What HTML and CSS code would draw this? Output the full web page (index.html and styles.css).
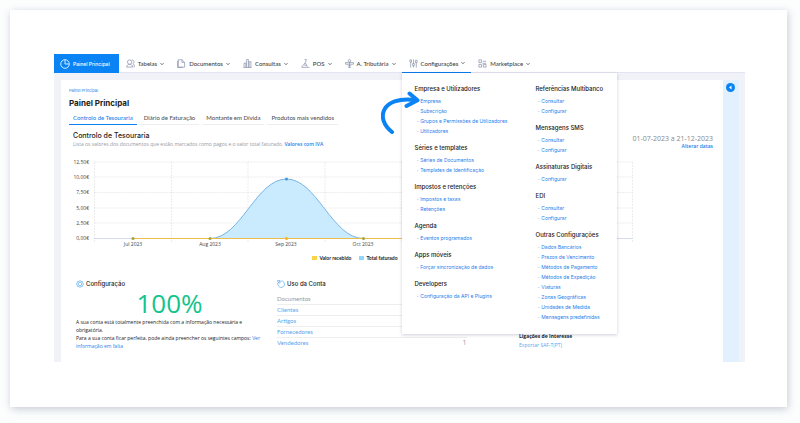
FILE: index.html
```html
<!DOCTYPE html>
<html lang="pt">
<head>
    <meta charset="UTF-8">
    <meta name="viewport" content="width=device-width, initial-scale=1.0">
    <title>Painel Principal</title>
    <link rel="stylesheet" href="styles.css">
</head>
<body>
    <div class="frame">
        <div class="app">
            <nav class="navbar">
                <a class="nav-item active" href="#">
                    <svg class="icon" viewBox="0 0 10 10"><circle cx="5" cy="5" r="4.3"/><path d="M5 .8V5h4.2"/></svg>
                    Painel Principal
                </a>
                <a class="nav-item" href="#">
                    <svg class="icon" viewBox="0 0 10 10"><circle cx="4" cy="3.4" r="2.4"/><path d="M.6 9c.2-2 1.6-3 3.4-3s3.2 1 3.4 3zM6.4 1.2c2.6-.6 3.4 3 1.2 4 1.2.5 1.8 1.8 1.9 3.3H8.4"/></svg>
                    Tabelas <svg class="caret" viewBox="0 0 4 4"><path d="M.5 1.2 2 2.7 3.5 1.2"/></svg>
                </a>
                <a class="nav-item" href="#">
                    <svg class="icon" viewBox="0 0 10 10"><path d="M1.5 9V.8h4l3 3V9zM5.5.8v3h3M.5 2v7.5h6"/></svg>
                    Documentos <svg class="caret" viewBox="0 0 4 4"><path d="M.5 1.2 2 2.7 3.5 1.2"/></svg>
                </a>
                <a class="nav-item" href="#">
                    <svg class="icon" viewBox="0 0 10 10"><path d="M.5 9.5h9M1.2 9.5v-5h2v5M4 9.5V.6h2v8.9M6.8 9.5V3h2v6.5"/></svg>
                    Consultas <svg class="caret" viewBox="0 0 4 4"><path d="M.5 1.2 2 2.7 3.5 1.2"/></svg>
                </a>
                <a class="nav-item" href="#">
                    <svg class="icon" viewBox="0 0 10 10"><path d="M4 .6h2L4.8 4 7 8.5M4.6 4.2 1 8.8M.6 9.3h8.8M3.4 6.5l3 1"/></svg>
                    POS <svg class="caret" viewBox="0 0 4 4"><path d="M.5 1.2 2 2.7 3.5 1.2"/></svg>
                </a>
                <a class="nav-item" href="#">
                    <svg class="icon" viewBox="0 0 10 10"><circle cx="5" cy="2" r="1.4"/><path d="M.6 4h8.8v1.8H.6zM5 3.5v6M3 7.5h4M3.5 9.5h3"/></svg>
                    A. Tributária <svg class="caret" viewBox="0 0 4 4"><path d="M.5 1.2 2 2.7 3.5 1.2"/></svg>
                </a>
                <div class="nav-open">
                    <a class="nav-item" href="#">
                        <svg class="icon" viewBox="0 0 10 10"><path d="M1 1h1.8v2.5H1zM4.1 5h1.8v2.5H4.1zM7.2 1.5H9V4H7.2zM1.9 3.5v6M5 .5V5M5 7.5v2M8.1 4v5.5"/></svg>
                        Configurações <svg class="caret" viewBox="0 0 4 4"><path d="M.5 1.2 2 2.7 3.5 1.2"/></svg>
                    </a>
                    <div class="mega-menu">
                        <div class="mega-col">
                            <section>
                                <h3>Empresa e Utilizadores</h3>
                                <ul>
                                    <li><a href="#">Empresa</a></li>
                                    <li><a href="#">Subscrição</a></li>
                                    <li><a href="#">Grupos e Permissões de Utilizadores</a></li>
                                    <li><a href="#">Utilizadores</a></li>
                                </ul>
                            </section>
                            <section>
                                <h3>Séries e templates</h3>
                                <ul>
                                    <li><a href="#">Séries de Documentos</a></li>
                                    <li><a href="#">Templates de Identificação</a></li>
                                </ul>
                            </section>
                            <section>
                                <h3>Impostos e retenções</h3>
                                <ul>
                                    <li><a href="#">Impostos e taxas</a></li>
                                    <li><a href="#">Retenções</a></li>
                                </ul>
                            </section>
                            <section>
                                <h3>Agenda</h3>
                                <ul>
                                    <li><a href="#">Eventos programados</a></li>
                                </ul>
                            </section>
                            <section>
                                <h3>Apps móveis</h3>
                                <ul>
                                    <li><a href="#">Forçar sincronização de dados</a></li>
                                </ul>
                            </section>
                            <section>
                                <h3>Developers</h3>
                                <ul>
                                    <li><a href="#">Configuração da API e Plugins</a></li>
                                </ul>
                            </section>
                        </div>
                        <div class="mega-col">
                            <section>
                                <h3>Referências Multibanco</h3>
                                <ul>
                                    <li><a href="#">Consultar</a></li>
                                    <li><a href="#">Configurar</a></li>
                                </ul>
                            </section>
                            <section>
                                <h3>Mensagens SMS</h3>
                                <ul>
                                    <li><a href="#">Consultar</a></li>
                                    <li><a href="#">Configurar</a></li>
                                </ul>
                            </section>
                            <section>
                                <h3>Assinaturas Digitais</h3>
                                <ul>
                                    <li><a href="#">Configurar</a></li>
                                </ul>
                            </section>
                            <section>
                                <h3>EDI</h3>
                                <ul>
                                    <li><a href="#">Consultar</a></li>
                                    <li><a href="#">Configurar</a></li>
                                </ul>
                            </section>
                            <section>
                                <h3>Outras Configurações</h3>
                                <ul>
                                    <li><a href="#">Dados Bancários</a></li>
                                    <li><a href="#">Prazos de Vencimento</a></li>
                                    <li><a href="#">Métodos de Pagamento</a></li>
                                    <li><a href="#">Métodos de Expedição</a></li>
                                    <li><a href="#">Viaturas</a></li>
                                    <li><a href="#">Zonas Geográficas</a></li>
                                    <li><a href="#">Unidades de Medida</a></li>
                                    <li><a href="#">Mensagens predefinidas</a></li>
                                </ul>
                            </section>
                        </div>
                    </div>
                    <svg class="arrow" viewBox="0 0 40 44"><path d="M11 41C-6 28 0 5 34 9"/><path d="M28.5 2.5 36.5 9.2 25.5 15"/></svg>
                </div>
                <a class="nav-item" href="#">
                    <svg class="icon" viewBox="0 0 10 10"><path d="M1 1h3v3H1zM1 6h3v3H1zM6 6h3v3H6zM5.5 2.5H9M5 4.8h4"/></svg>
                    Marketplace <svg class="caret" viewBox="0 0 4 4"><path d="M.5 1.2 2 2.7 3.5 1.2"/></svg>
                </a>
            </nav>

            <div class="workspace">
                <main class="page">
                    <a class="breadcrumb" href="#">Painel Principal</a>
                    <h1>Painel Principal</h1>
                    <div class="tabs">
                        <a class="tab selected" href="#">Controlo de Tesouraria</a>
                        <a class="tab" href="#">Diário de Faturação</a>
                        <a class="tab" href="#">Montante em Dívida</a>
                        <a class="tab" href="#">Produtos mais vendidos</a>
                    </div>

                    <div class="treasury-head">
                        <div>
                            <h2>Controlo de Tesouraria</h2>
                            <p>Lista os valores dos documentos que estão marcados como pagos e o valor total faturado. <a href="#">Valores com IVA</a></p>
                        </div>
                        <div class="period">
                            <span>01-07-2023 a 21-12-2023</span>
                            <a href="#">Alterar datas</a>
                        </div>
                    </div>

                    <div class="chart">
                        <svg viewBox="0 0 564 92">
                            <path class="grid" d="M25.5 7h538M25.5 22h538M25.5 37.5h538M25.5 53h538M25.5 68h538M25.5 7v80M102.5 7v80M179 7v80M256 7v80M333 7v80M410 7v80M487 7v80M563.5 7v80"/>
                            <path class="axis" d="M25 83.5h539"/>
                            <path class="area" d="M141 83.5C172 83.5 187 24 217.5 24S263 83.5 294.5 83.5z"/>
                            <path class="curve" d="M64 83.5H141C172 83.5 187 24 217.5 24S263 83.5 294.5 83.5H525"/>
                            <path class="received" d="M64 83.5H525"/>
                            <g class="dots">
                                <circle cx="64" cy="83.5" r="1.5"/><circle cx="141" cy="83.5" r="1.5"/><circle cx="294.5" cy="83.5" r="1.5"/>
                                <circle class="dot-gold" cx="217.5" cy="83.5" r="1.5"/><circle class="dot-blue" cx="217.5" cy="24" r="1.5"/>
                            </g>
                            <g class="y-labels">
                                <text x="20" y="9">12,50€</text>
                                <text x="20" y="24">10,00€</text>
                                <text x="20" y="39">7,50€</text>
                                <text x="20" y="55">5,00€</text>
                                <text x="20" y="70">2,50€</text>
                                <text x="20" y="85">0,00€</text>
                            </g>
                            <g class="x-labels">
                                <text x="64" y="91">Jul 2023</text>
                                <text x="141" y="91">Aug 2023</text>
                                <text x="217" y="91">Sep 2023</text>
                                <text x="294" y="91">Oct 2023</text>
                            </g>
                        </svg>
                        <div class="legend">
                            <span class="key gold">Valor recebido</span>
                            <span class="key blue">Total faturado</span>
                        </div>
                    </div>

                    <div class="widgets">
                        <section class="setup">
                            <h4><svg class="badge" viewBox="0 0 10 10"><path d="M5 .7l1.3 1 1.7.1.4 1.7L9.5 5 8.4 6.5 8 8.2l-1.7.1-1.3 1-1.3-1L2 8.2l-.4-1.7L.5 5l1.1-1.5L2 1.800l1.700-.1z"/><circle cx="5" cy="5" r="2.3"/></svg>Configuração</h4>
                            <strong class="percent">100%</strong>
                            <p>A sua conta está totalmente preenchida com a informação necessária e obrigatória.</p>
                            <p>Para a sua conta ficar perfeita, pode ainda preencher os seguintes campos: <a href="#">Ver informação em falta</a></p>
                        </section>
                        <section class="usage">
                            <h4><svg class="badge" viewBox="0 0 10 10"><path d="M3.2 1.5A4.2 4.2 0 1 0 8.8 3 4.2 4.2 0 0 0 5 1.2M.6.7h3.2v3.1C2 3.8.6 2.5.6.7z"/></svg>Uso da Conta</h4>
                            <table>
                                <tr><th scope="row">Documentos</th><td></td></tr>
                                <tr><th scope="row"><a href="#">Clientes</a></th><td></td></tr>
                                <tr><th scope="row"><a href="#">Artigos</a></th><td></td></tr>
                                <tr><th scope="row"><a href="#">Fornecedores</a></th><td></td></tr>
                                <tr><th scope="row"><a href="#">Vendedores</a></th><td>1</td></tr>
                            </table>
                        </section>
                        <section class="links">
                            <h5>Ligações de Interesse</h5>
                            <a href="#">Exportar SAF-T(PT)</a>
                        </section>
                    </div>
                </main>
                <aside class="side">
                    <button class="side-toggle" type="button" aria-label="Abrir painel">
                        <svg viewBox="0 0 9 9"><path d="M5.5 2.5v4L3 4.5z"/></svg>
                    </button>
                </aside>
            </div>
        </div>
    </div>
</body>
</html>
```
FILE: styles.css
```css
* {
    box-sizing: border-box;
}
body {
    margin: 0;
    background-color: #fcfefe;
    color: #222;
    font-family: Inter, "Open Sans", sans-serif;
    font-size: 5px;
}
a {
    color: #2680eb;
    text-decoration: none;
}
h1, h2, h3, h4, h5, p, ul {
    margin: 0;
    padding: 0;
}
.frame {
    margin: 10px 13px 14px 10px;
    padding: 44px 42px 45px 44px;
    background-color: #fff;
    box-shadow: 1px 2px 8px rgba(40, 50, 90, 0.25);
}

/* top navigation */
.navbar {
    display: flex;
    height: 19px;
    border-bottom: 1px solid #e3e3f1;
}
.nav-item {
    display: flex;
    align-items: center;
    gap: 3px;
    height: 19px;
    padding: 0 6px 0 7px;
    color: #444;
    font-family: Lato, sans-serif;
    font-size: 6px;
    font-weight: 500;
    white-space: nowrap;
}
.nav-item.active {
    padding: 0 9px 0 6px;
    background-color: #0a84f5;
    color: #fff;
    font-family: Inter, sans-serif;
    font-size: 5px;
}
.icon {
    width: 9px;
    height: 9px;
    fill: none;
    stroke: #8b93ad;
    stroke-width: 0.8;
}
.active .icon {
    width: 10px;
    height: 10px;
    stroke: #fff;
}
.caret {
    width: 4px;
    height: 4px;
    fill: none;
    stroke: #444;
    stroke-width: 0.8;
}
.nav-open {
    position: relative;
}
.nav-open > .nav-item {
    border-bottom: 1px solid #0a7be8;
}
.mega-menu {
    position: absolute;
    top: 19px;
    left: 0;
    display: grid;
    grid-template-columns: 121px 81px;
    padding: 10px 0 12px 13px;
    background-color: #fff;
    box-shadow: 0 1px 3px rgba(60, 60, 120, 0.25);
}
.mega-col {
    display: flex;
    flex-direction: column;
    gap: 6px;
}
.mega-col h3 {
    margin-bottom: 1px;
    font-size: 6px;
    font-weight: 500;
    line-height: 12px;
    white-space: nowrap;
}
.mega-col ul {
    list-style: none;
}
.mega-col li {
    padding-left: 2px;
    color: #8ab4e8;
    line-height: 10px;
    white-space: nowrap;
}
.mega-col li::before {
    content: "- ";
}
.arrow {
    position: absolute;
    top: 37px;
    left: -21px;
    width: 40px;
    height: 44px;
    fill: none;
    stroke: #0a84f5;
    stroke-width: 4;
    stroke-linecap: round;
    stroke-linejoin: round;
}

/* page */
.workspace {
    display: flex;
    padding: 7px 6px 0 7px;
    background-color: #f1f1f8;
}
.page {
    flex: 1;
    padding: 8px 10px 12px 8px;
    background-color: #fff;
}
.side {
    width: 16px;
    padding: 3px;
    background-color: #e3f0fd;
}
.side-toggle {
    display: block;
    width: 9px;
    height: 9px;
    padding: 0;
    border: none;
    border-radius: 50%;
    background-color: #0a84f5;
}
.side-toggle svg {
    display: block;
    fill: #fff;
}
.breadcrumb {
    display: block;
    font-size: 4px;
    line-height: 6px;
}
h1 {
    font-size: 8px;
    font-weight: 700;
    line-height: 18px;
}
.tabs {
    display: flex;
    gap: 3px;
}
.tab {
    padding: 0 4px;
    border-bottom: 1px solid #eee;
    color: #555;
    font-family: Lato, sans-serif;
    font-size: 6px;
    font-weight: 500;
    line-height: 12px;
}
.tab.selected {
    border-color: #0a84f5;
    color: #2680eb;
}
.treasury-head {
    display: flex;
    justify-content: space-between;
    padding: 6px 0 0 4px;
}
.treasury-head h2 {
    font-size: 7px;
    font-weight: 500;
    line-height: 9px;
}
.treasury-head p {
    color: #999;
    font-family: "Open Sans", sans-serif;
    line-height: 9px;
}
.treasury-head p a {
    font-weight: 600;
}
.period {
    display: flex;
    flex-direction: column;
    padding-top: 3px;
    color: #888;
    font-family: "Open Sans", sans-serif;
    font-size: 7px;
    line-height: 9px;
    text-align: right;
}
.period a {
    font-size: 5px;
    font-weight: 600;
    line-height: 7px;
}

/* chart */
.chart {
    padding: 5px 80px 0 0;
    font-family: "Open Sans", sans-serif;
}
.chart svg {
    display: block;
    width: 100%;
    fill: none;
}
.grid {
    stroke: #e4e4e4;
    stroke-dasharray: 2 1;
    stroke-width: 0.7;
}
.axis {
    stroke: #d3dcec;
}
.area {
    fill: #caeafe;
}
.curve {
    stroke: #76b5e6;
}
.received {
    stroke: #e9bd4d;
}
.dots circle {
    fill: #a8a238;
}
.dots .dot-gold {
    fill: #f2b824;
}
.dots .dot-blue {
    fill: #4596dd;
}
.chart text {
    fill: #444;
    font-size: 5px;
}
.y-labels text {
    text-anchor: end;
}
.x-labels text {
    text-anchor: middle;
}
.legend {
    display: flex;
    justify-content: center;
    gap: 8px;
    padding-top: 7px;
    padding-left: 8px;
    font-family: Lato, sans-serif;
    font-weight: 700;
    line-height: 8px;
}
.key {
    display: flex;
    align-items: center;
    gap: 2px;
}
.key::before {
    content: "";
    width: 5px;
    height: 4px;
    background-color: #fad444;
}
.key.blue::before {
    background-color: #8ed6fb;
}

/* lower widgets */
.widgets {
    display: grid;
    grid-template-columns: 187fr 190fr 228fr;
    column-gap: 14px;
    padding: 16px 4px 0 7px;
}
.widgets h4 {
    display: flex;
    align-items: center;
    gap: 2px;
    font-size: 6px;
    font-weight: 500;
    line-height: 11px;
}
.badge {
    width: 8px;
    height: 8px;
    fill: none;
    stroke: #4aa3f0;
    stroke-width: 0.8;
}
.setup {
    font-family: "Open Sans", sans-serif;
    line-height: 8px;
}
.setup h4 {
    font-family: Inter, sans-serif;
}
.percent {
    display: block;
    color: #12c48b;
    font-size: 26px;
    font-weight: 400;
    line-height: 29px;
    text-align: center;
}
.usage table {
    width: 100%;
    margin-top: 4px;
    border-collapse: collapse;
    color: #999;
}
.usage th,
.usage td {
    height: 11px;
    padding: 0;
    border-bottom: 1px solid #eee;
    font-size: 6px;
    font-weight: 400;
    text-align: left;
}
.usage tr:last-child > * {
    border-bottom: none;
}
.usage th {
    font-family: Lato, sans-serif;
}
.usage td {
    width: 4px;
}
.usage a,
.links a {
    color: #5aa5ee;
}
.links {
    padding: 54px 0 0 38px;
    font-family: "Open Sans", sans-serif;
    line-height: 9px;
}
.links h5 {
    font-size: 5px;
    font-weight: 700;
}
```
